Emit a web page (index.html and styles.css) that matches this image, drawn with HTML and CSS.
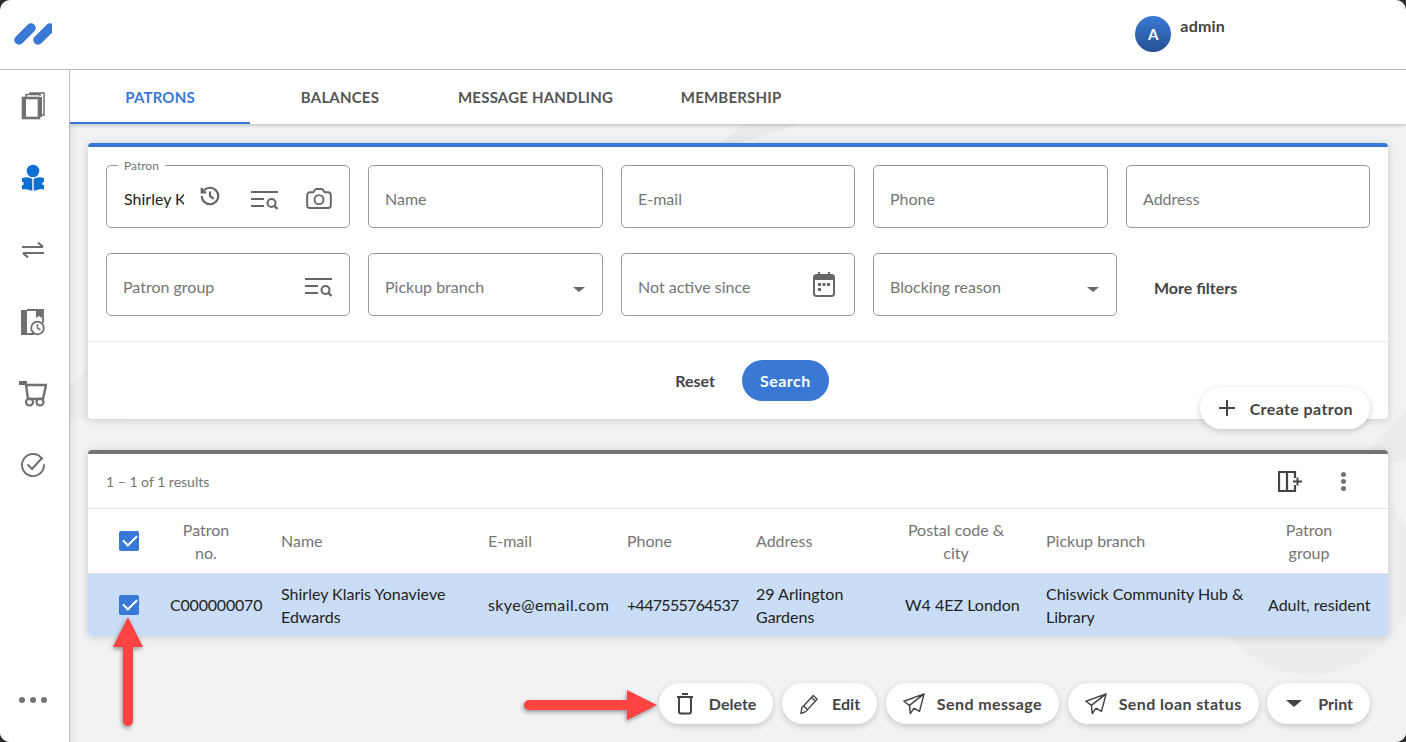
FILE: index.html
```html
<!DOCTYPE html>
<html lang="en">
<head>
    <meta charset="UTF-8">
    <title>Patrons</title>
    <link rel="stylesheet" href="styles.css">
</head>
<body>
    <svg class="defs" width="0" height="0">
        <symbol id="list-search" viewBox="0 0 28 20">
            <path d="M1 2h27M1 9h13M1 16h13" fill="none" stroke="#666" stroke-width="2"/>
            <circle cx="21.5" cy="13" r="4" fill="none" stroke="#666" stroke-width="2"/>
            <path d="M24.5 16l3 3" stroke="#666" stroke-width="2.4"/>
        </symbol>
        <symbol id="plane" viewBox="0 0 24 24">
            <path d="M23 1L1 9l6 4.5L23 1zM23 1L7 13.5l1 9 4-6M23 1l-5 19-6-3.5" fill="none" stroke="#444" stroke-width="1.6" stroke-linejoin="round"/>
        </symbol>
    </svg>
    <div class="app">
        <header class="topbar">
            <svg class="logo" width="38" height="22" viewBox="0 0 38 22">
                <path d="M5 17L17 5M24 17L36 5" stroke="#3a78d6" stroke-width="9.5" stroke-linecap="round"/>
            </svg>
            <div class="user">
                <div class="avatar">A</div>
                <div class="user-name">admin</div>
            </div>
        </header>

        <nav class="sidebar">
            <div class="nav-item">
                <svg width="24" height="28" viewBox="0 0 24 28">
                    <path d="M5 5V2.5h14V4M9 2.500V1h14v22h-2" fill="none" stroke="#6f6f6f" stroke-width="1.500"/>
                    <path d="M19 5h2v20h-2z" fill="#6f6f6f"/>
                    <rect x="2" y="6" width="16" height="20" fill="#fff" stroke="#6f6f6f" stroke-width="2.600"/>
                    <path d="M1 5h4v22H1z" fill="#6f6f6f"/>
                </svg>
            </div>
            <div class="nav-item">
                <svg width="24" height="28" viewBox="0 0 24 28">
                    <circle cx="12" cy="7" r="6.300" fill="#0f6fd0"/>
                    <path d="M1 14c4-1.500 8-.5 10.300 1v12C8 25.500 4 25 1 25.500zM23 14c-4-1.500-8-.5-10.300 1v12c3.300-1.500 7.300-2 10.300-1.500z" fill="#0f6fd0"/>
                    <path d="M1 18h1.500v3H1zM21.500 18H23v3h-1.500z" fill="#fff"/>
                </svg>
            </div>
            <div class="nav-item">
                <svg width="24" height="18" viewBox="0 0 24 18">
                    <path d="M1 6h21M17 1.500L22 6M23 12H2M7 16.500L2 12" fill="none" stroke="#6f6f6f" stroke-width="2.200"/>
                </svg>
            </div>
            <div class="nav-item">
                <svg width="24" height="27" viewBox="0 0 24 27">
                    <path d="M0 1h6v25H0z" fill="#6f6f6f"/>
                    <path d="M6 1h16v13M6 25h7" fill="none" stroke="#6f6f6f" stroke-width="1.800"/>
                    <path d="M15 1h6v8l-3-2-3 2z" fill="#6f6f6f"/>
                    <circle cx="16.500" cy="19" r="6.300" fill="#fff" stroke="#6f6f6f" stroke-width="1.800"/>
                    <path d="M16.500 15v4.200l3 1.800" fill="none" stroke="#6f6f6f" stroke-width="1.500"/>
                </svg>
            </div>
            <div class="nav-item">
                <svg width="28" height="26" viewBox="0 0 28 26">
                    <path d="M0 0h8v4H0z" fill="#6f6f6f"/>
                    <path d="M7 4h20l-3 14H9z" fill="none" stroke="#6f6f6f" stroke-width="2.400"/>
                    <circle cx="10.500" cy="21" r="3.500" fill="none" stroke="#6f6f6f" stroke-width="2.200"/>
                    <circle cx="21" cy="21" r="3.500" fill="none" stroke="#6f6f6f" stroke-width="2.200"/>
                </svg>
            </div>
            <div class="nav-item nav-check">
                <svg width="24" height="24" viewBox="0 0 24 24">
                    <path d="M21 5.700A11 11 0 1 0 23 12" fill="none" stroke="#6f6f6f" stroke-width="1.900" stroke-linecap="round"/>
                    <path d="M7 12l4 4L21 5" fill="none" stroke="#6f6f6f" stroke-width="1.900" stroke-linecap="round"/>
                </svg>
            </div>
            <div class="nav-more"><span></span><span></span><span></span></div>
        </nav>

        <main class="main">
            <svg class="decor" width="1336" height="618" viewBox="70 124 1336 618">
                <polygon points="70,385 130,325 130,420 70,420" fill="#000" opacity=".018"/>
                <polygon points="745,124 800,124 740,143 720,143" fill="#000" opacity=".03"/>
                <polygon points="1406,410 1406,460 1350,470" fill="#000" opacity=".025"/>
                <circle cx="1310" cy="570" r="105" fill="#000" opacity=".018"/>
            </svg>
            <div class="tabs">
                <div class="tab active">PATRONS</div>
                <div class="tab">BALANCES</div>
                <div class="tab">MESSAGE HANDLING</div>
                <div class="tab">MEMBERSHIP</div>
            </div>

            <div class="content">
                <section class="card search-card">
                    <div class="fields-row first">
                        <div class="field">
                            <span class="legend">Patron</span>
                            <span class="field-value">Shirley Klaris</span>
                            <svg class="icon-history" width="22" height="22" viewBox="0 0 24 24" fill="none" stroke="#666" stroke-width="2.400">
                                <path d="M3 12a9 9 0 1 0 9-9 9.750 9.750 0 0 0-6.740 2.740L3 8"/>
                                <path d="M3 3v5h5M12 7v5l4 3"/>
                            </svg>
                            <svg class="icon-list first-list" width="28" height="20"><use href="#list-search"/></svg>
                            <svg class="icon-camera" width="28" height="27" viewBox="0 0 24 24" fill="none" stroke="#666" stroke-width="1.700" stroke-linejoin="round">
                                <path d="M15 3.500H9L7 6.500H4a2.500 2.500 0 0 0-2.500 2.500v9A2.500 2.500 0 0 0 4 20.500h16a2.500 2.500 0 0 0 2.500-2.500V9A2.500 2.500 0 0 0 20 6.500h-3z"/>
                                <circle cx="12" cy="13" r="4"/>
                            </svg>
                        </div>
                        <div class="field">Name</div>
                        <div class="field">E-mail</div>
                        <div class="field">Phone</div>
                        <div class="field">Address</div>
                    </div>
                    <div class="fields-row second">
                        <div class="field spread">Patron group
                            <svg width="28" height="20"><use href="#list-search"/></svg>
                        </div>
                        <div class="field spread">Pickup branch <span class="caret"></span></div>
                        <div class="field spread">Not active since
                            <svg class="icon-calendar" width="22" height="25" viewBox="0 0 22 25">
                                <path d="M5 0h2v4H5zM15 0h2v4h-2z" fill="#666"/>
                                <rect x="1" y="3" width="20" height="21" rx="2.500" fill="none" stroke="#666" stroke-width="2"/>
                                <path d="M1 3h20v5H1z" fill="#666"/>
                                <path d="M5 11h3v3H5zM9.500 11h3v3h-3zM14 11h3v3h-3zM5 16h3v3H5z" fill="#666"/>
                            </svg>
                        </div>
                        <div class="field spread">Blocking reason <span class="caret"></span></div>
                        <div class="more-filters">More filters</div>
                    </div>
                    <div class="search-actions">
                        <span class="reset">Reset</span>
                        <span class="search-btn">Search</span>
                    </div>
                    <div class="pill create">
                        <svg width="18" height="18" viewBox="0 0 18 18"><path d="M9 1v16M1 9h16" stroke="#444" stroke-width="2"/></svg>
                        Create patron
                    </div>
                </section>

                <section class="card results-card">
                    <div class="results-bar">
                        <span>1 – 1 of 1 results</span>
                        <div class="results-tools">
                            <svg width="24" height="22" viewBox="0 0 24 22">
                                <path d="M17 8V2H1v19h16v-6M9 2v19" fill="none" stroke="#444" stroke-width="2.200"/>
                                <path d="M15 11.500h9M19.500 7.500v8" stroke="#444" stroke-width="2"/>
                            </svg>
                            <div class="kebab"><span></span><span></span><span></span></div>
                        </div>
                    </div>
                    <table class="results">
                        <colgroup>
                            <col class="c-check"><col class="c-no"><col class="c-name"><col class="c-mail"><col class="c-phone"><col class="c-addr"><col class="c-post"><col class="c-branch"><col class="c-group">
                        </colgroup>
                        <thead>
                            <tr>
                                <th><div class="check"></div></th>
                                <th class="th-no">Patron no.</th>
                                <th>Name</th>
                                <th>E-mail</th>
                                <th>Phone</th>
                                <th>Address</th>
                                <th class="th-post">Postal code &amp; city</th>
                                <th>Pickup branch</th>
                                <th class="th-group">Patron group</th>
                            </tr>
                        </thead>
                        <tbody>
                            <tr>
                                <td><div class="check"></div></td>
                                <td class="td-no">C000000070</td>
                                <td>Shirley Klaris Yonavieve Edwards</td>
                                <td class="td-mail">skye@email.com</td>
                                <td class="td-phone">+447555764537</td>
                                <td>29 Arlington Gardens</td>
                                <td>W4 4EZ London</td>
                                <td>Chiswick Community Hub &amp; Library</td>
                                <td>Adult, resident</td>
                            </tr>
                        </tbody>
                    </table>
                </section>

                <div class="bottom-actions">
                    <div class="pill pill-delete">
                        <svg width="16" height="22" viewBox="0 0 16 22" fill="none" stroke="#444" stroke-width="2">
                            <path d="M0 4h16M5 1h6"/><rect x="2" y="4" width="12" height="16.500" rx="2"/>
                        </svg>
                        Delete
                    </div>
                    <div class="pill pill-edit">
                        <svg width="20" height="22" viewBox="0 0 21 22" fill="none" stroke="#444" stroke-width="1.500" stroke-linejoin="round">
                            <path d="M15 2l4 4L7 19l-5 2 1-6zM13 4l4 4M5 13l4 4"/>
                        </svg>
                        Edit
                    </div>
                    <div class="pill pill-send">
                        <svg width="22" height="22"><use href="#plane"/></svg>
                        Send message
                    </div>
                    <div class="pill pill-send">
                        <svg width="22" height="22"><use href="#plane"/></svg>
                        Send loan status
                    </div>
                    <div class="pill pill-print">
                        <span class="caret big"></span>
                        Print
                    </div>
                </div>
            </div>
        </main>
    </div>

    <svg class="arrows" width="1406" height="742" viewBox="0 0 1406 742">
        <g fill="#ff4343" stroke="none">
            <path d="M128 617l15 30h-10v74a5 5 0 0 1-10 0v-74h-10z"/>
            <path d="M657 705l-30 15v-10H529a5 5 0 0 1 0-10h98v-10z"/>
        </g>
    </svg>
</body>
</html>
```

FILE: styles.css
```css
* {
    box-sizing: border-box;
}
html, body {
    margin: 0;
    padding: 0;
}
body {
    width: 1406px;
    height: 742px;
    overflow: hidden;
    position: relative;
    background: #2c2c2c;
    font-family: "Lato", "Noto Sans", sans-serif;
    font-size: 16px;
    color: #222;
}
.defs {
    position: absolute;
}
.app {
    width: 1406px;
    height: 742px;
    border-radius: 10px;
    overflow: hidden;
    background: #fff;
    display: grid;
    grid-template-columns: 70px 1fr;
    grid-template-rows: 70px 1fr;
}

/* header */
.topbar {
    grid-column: 1 / 3;
    border-bottom: 1px solid #bcbec4;
    display: flex;
    justify-content: space-between;
    padding: 0 181px 0 14px;
}
.logo {
    margin-top: 23px;
}
.user {
    display: flex;
    gap: 9px;
    padding-top: 16px;
}
.avatar {
    width: 36px;
    height: 36px;
    border-radius: 50%;
    background: linear-gradient(#3b7ad6, #25508f);
    color: #fff;
    font-weight: 700;
    font-size: 15px;
    display: flex;
    align-items: center;
    justify-content: center;
}
.user-name {
    font-weight: 700;
    font-size: 16px;
    letter-spacing: .2px;
    color: #444;
}

/* left nav */
.sidebar {
    border-right: 1px solid #bcbec4;
    display: flex;
    flex-direction: column;
    align-items: center;
    padding: 20px 4px 39px 0;
    position: relative;
    z-index: 2;
    background: #fff;
}
.nav-item {
    height: 32px;
    margin-bottom: 40px;
    display: flex;
    align-items: center;
    justify-content: center;
}
.nav-check {
    margin-top: -1px;
}
.nav-more {
    margin-top: auto;
    display: flex;
    gap: 5px;
}
.nav-more span, .kebab span {
    display: block;
    width: 6px;
    height: 6px;
    border-radius: 50%;
    background: #737373;
}

/* main */
.main {
    position: relative;
    background: #f1f2f4;
    box-shadow: inset 8px 0 10px -8px rgba(0, 0, 0, .12);
}
.decor {
    position: absolute;
    left: 0;
    top: 54px;
}
.tabs {
    position: relative;
    height: 54px;
    background: #fff;
    display: flex;
    box-shadow: 0 1px 4px rgba(0, 0, 0, .25);
}
.tab {
    min-width: 180px;
    padding: 0 28px;
    display: flex;
    align-items: center;
    justify-content: center;
    font-size: 15px;
    font-weight: 700;
    color: #555;
    letter-spacing: .2px;
}
.tab.active {
    color: #3a78d6;
    padding-top: 2px;
    border-bottom: 2px solid #3a78d6;
}
.content {
    position: relative;
    padding: 19px 18px 0;
}
.card {
    background: #fff;
    border-radius: 4px;
    box-shadow: 0 1px 8px rgba(0, 0, 0, .16);
}

/* search */
.search-card {
    position: relative;
    border-top: 4px solid #3a78d6;
    padding-top: 18px;
    height: 276px;
}
.fields-row {
    display: grid;
    gap: 18px;
    padding: 0 18px;
    margin-bottom: 25px;
}
.fields-row.first {
    grid-template-columns: 244px 235px 234px 235px 244px;
}
.fields-row.second {
    grid-template-columns: 244px 235px 234px 244px 1fr;
    padding-bottom: 25px;
    border-bottom: 1px solid #eee;
    margin-bottom: 0;
}
.field {
    position: relative;
    height: 63px;
    border: 1px solid #999;
    border-radius: 5px;
    padding: 4px 16px 0;
    display: flex;
    align-items: center;
    color: #757575;
}
.field.spread {
    justify-content: space-between;
}
.legend {
    position: absolute;
    left: 11px;
    top: -7px;
    padding: 0 6px;
    background: #fff;
    font-size: 12px;
    line-height: 13px;
}
.field-value {
    width: 60px;
    flex: none;
    margin-left: 1px;
    overflow: hidden;
    white-space: nowrap;
    color: #222;
}
.icon-history {
    margin: -6px 0 0 15px;
    flex: none;
}
.first-list {
    margin: 3px 0 0 29px;
    flex: none;
}
.icon-camera {
    margin-left: 27px;
    flex: none;
}
.second .field svg {
    margin-right: 1px;
}
.second .field .icon-calendar {
    margin: 0 3px 4px 0;
}
.caret {
    width: 0;
    height: 0;
    margin-right: 1px;
    margin-top: 5px;
    border-left: 6px solid transparent;
    border-right: 6px solid transparent;
    border-top: 5px solid #666;
}
.caret.big {
    margin: 0 1px;
    border-left-width: 8px;
    border-right-width: 8px;
    border-top: 7px solid #444;
}
.more-filters {
    align-self: center;
    padding: 5px 0 0 19px;
    font-weight: 700;
    color: #444;
}
.search-actions {
    display: flex;
    align-items: center;
    justify-content: center;
    gap: 27px;
    padding: 18px 0 0 28px;
}
.reset {
    font-weight: 700;
    font-size: 16px;
    color: #444;
}
.search-btn {
    width: 87px;
    height: 41px;
    border-radius: 21px;
    background: #3a78d6;
    color: #fff;
    font-weight: 700;
    font-size: 16px;
    letter-spacing: .5px;
    display: flex;
    align-items: center;
    justify-content: center;
}
.pill {
    height: 41px;
    padding: 0 17px 0 18px;
    border-radius: 21px;
    background: #fff;
    box-shadow: 0 2px 6px rgba(0, 0, 0, .18);
    display: flex;
    align-items: center;
    gap: 14px;
    font-weight: 700;
    font-size: 16px;
    letter-spacing: .4px;
    color: #444;
    white-space: nowrap;
}
.pill-delete {
    gap: 16px;
    letter-spacing: 0;
}
.pill-edit {
    gap: 13px;
    padding-left: 17px;
    letter-spacing: 0;
}
.pill-send {
    gap: 12px;
    padding-left: 17px;
}
.pill-print {
    gap: 15px;
    letter-spacing: 0;
}
.pill.create {
    position: absolute;
    right: 18px;
    bottom: -10px;
    height: 42px;
}

/* results */
.results-card {
    margin-top: 31px;
    border-top: 4px solid #737373;
    overflow: hidden;
}
.results-bar {
    height: 55px;
    padding: 0 18px;
    border-bottom: 1px solid #e2e2e2;
    display: flex;
    align-items: center;
    justify-content: space-between;
    font-size: 14px;
    color: #757575;
}
.results-tools {
    display: flex;
    align-items: center;
    gap: 39px;
    padding-right: 24px;
}
.kebab {
    display: flex;
    flex-direction: column;
    gap: 2px;
}
.kebab span {
    width: 5px;
    height: 5px;
}
.results {
    width: 1300px;
    table-layout: fixed;
    border-collapse: collapse;
}
.c-check { width: 64px; }
.c-no { width: 120px; }
.c-name { width: 207px; }
.c-mail { width: 139px; }
.c-phone { width: 129px; }
.c-addr { width: 149px; }
.c-post { width: 141px; }
.c-branch { width: 222px; }
.c-group { width: 129px; }
.results th, .results td {
    padding: 0 9px;
    text-align: left;
    font-weight: 400;
    line-height: 23px;
}
.results th {
    height: 64px;
    color: #757575;
    border-bottom: 1px solid #e2e2e2;
}
.results td {
    height: 63px;
    background: #c9ddf6;
}
.results th:first-child, .results td:first-child {
    padding-left: 31px;
    padding-right: 0;
}
.results .th-no {
    padding: 0 30px 0 18px;
    text-align: center;
}
.results .td-no {
    padding-left: 18px;
    letter-spacing: -.2px;
}
.results .td-mail {
    letter-spacing: .4px;
}
.results .td-phone {
    letter-spacing: -.7px;
}
.results .th-post {
    padding: 0 30px 0 9px;
    text-align: center;
}
.results .th-group {
    padding: 0 38px 0 9px;
    text-align: center;
}
.check {
    width: 20px;
    height: 20px;
    border-radius: 2px;
    background: #3a78d6;
    position: relative;
}
.check::after {
    content: "";
    position: absolute;
    left: 4px;
    top: 4px;
    width: 12px;
    height: 6px;
    border-left: 2px solid #fff;
    border-bottom: 2px solid #fff;
    transform: rotate(-45deg);
}

/* bottom buttons */
.bottom-actions {
    position: relative;
    margin-top: 47px;
    display: flex;
    justify-content: flex-end;
    gap: 8.750px;
    padding-right: 18px;
}
.arrows {
    position: absolute;
    left: 0;
    top: 0;
    z-index: 5;
    filter: drop-shadow(-1px 2px 2px rgba(0, 0, 0, .4));
    pointer-events: none;
}
```
